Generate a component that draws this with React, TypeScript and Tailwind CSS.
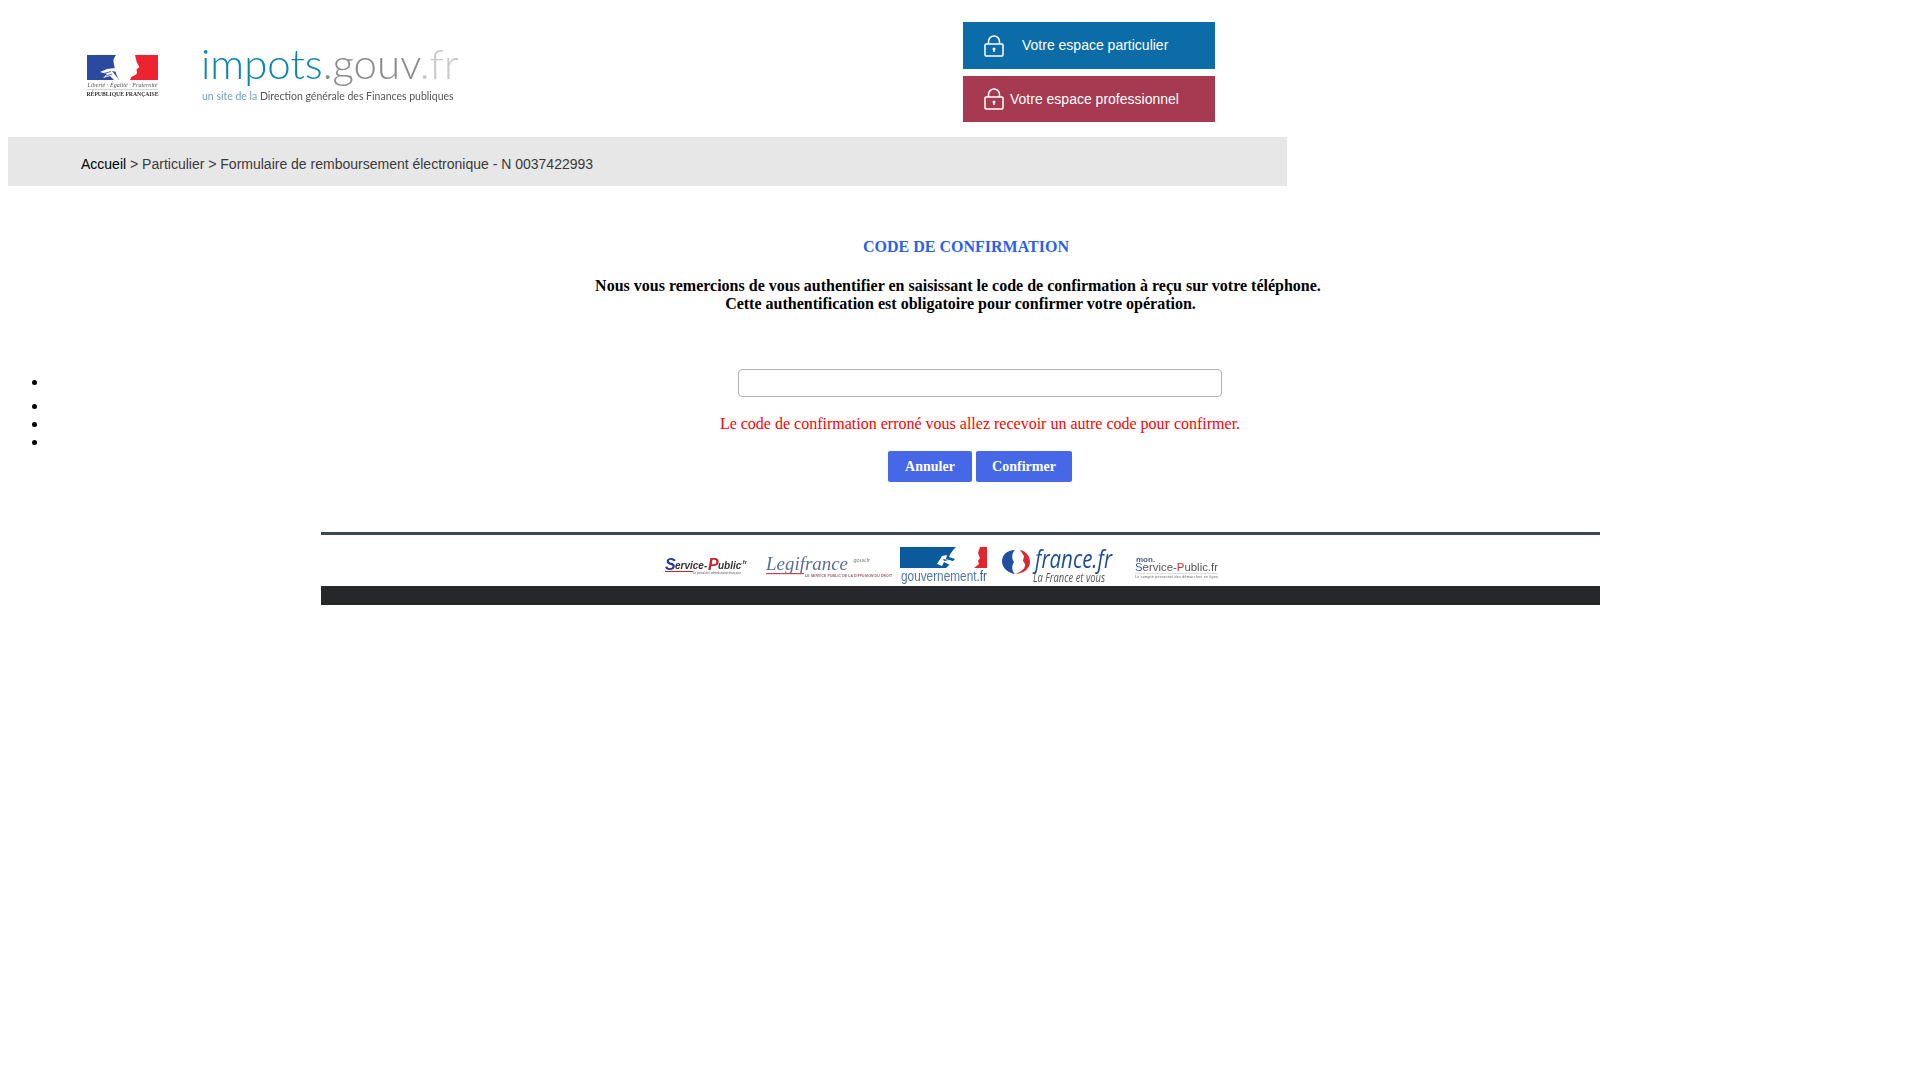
import React, { FC } from 'react';

const LockIcon: FC = () => (
  <svg width="20" height="22" viewBox="0 0 20 22" fill="none" stroke="white" strokeWidth="1.5" className="shrink-0">
    <rect x="1" y="9" width="18" height="12" rx="1" />
    <path d="M4.5 9V6.5a5.5 5.5 0 0 1 11 0V9" />
    <circle cx="10" cy="14" r="1.5" fill="white" stroke="none" />
    <rect x="9.3" y="14" width="1.4" height="3" fill="white" stroke="none" />
  </svg>
);

const RepublicLogo: FC = () => (
  <svg width="74" height="46" viewBox="0 0 74 46" className="overflow-visible blur-[0.3px]">
    <path d="M1 0H30C28 3 27 5 27.5 7C28 10 29 13 29 15C30 18 31 22 33 25H1Z" fill="#2b4a9f" />
    <path d="M49 0H72V25H44C45 23 45 22 46 21.5C48 20.5 51 20 51 17.5L50.5 14.5L53.3 12L50.7 7Z" fill="#ee2331" />
    <path d="M14 17L21 14L29 13L31 17L26 16L30 21L33 25H28L24 21L17 23L21 19Z" fill="#ffffff" />
    <path d="M18 18.5L25 16.5M20 21L26 19" stroke="#2b4a9f" strokeWidth="0.8" />
    <text x="36.5" y="32" textAnchor="middle" fontSize="6" fontStyle="italic" fontFamily="Liberation Serif, serif" fill="#555555" textLength="70">
      Liberté · Égalité · Fraternité
    </text>
    <rect x="1" y="34" width="71" height="0.6" fill="#bbbbbb" />
    <text x="36.5" y="41" textAnchor="middle" fontSize="6" fontWeight="700" fontFamily="Liberation Serif, serif" fill="#333333" textLength="72" lengthAdjust="spacingAndGlyphs">
      RÉPUBLIQUE FRANÇAISE
    </text>
  </svg>
);

const ImpotsLogo: FC = () => (
  <div className="flex w-[260px] flex-col font-['Lato',sans-serif] blur-[0.3px]">
    <div className="text-[42px] leading-[47px] font-light whitespace-nowrap">
      <span className="text-[#0c86ad]">impots</span>
      <span className="text-[#8c8c8c]">.gouv</span>
      <span className="text-[#c9c9c9]">.fr</span>
    </div>
    <div className="mt-[2px] ml-[1px] text-[10.5px] leading-[14px] whitespace-nowrap">
      <span className="text-[#6f9fc0]">un site de la </span>
      <span className="text-[#555555]">Direction générale des Finances publiques</span>
    </div>
  </div>
);

const SpaceButton: FC<{ label: string; color: string; labelClass: string; heightClass: string }> = ({
  label,
  color,
  labelClass,
  heightClass,
}) => (
  <a className={`flex w-[252px] items-center pl-[21px] font-['Liberation_Sans',sans-serif] text-[14px] text-white ${heightClass} ${color}`}>
    <LockIcon />
    <span className={labelClass}>{label}</span>
  </a>
);

const Header: FC = () => (
  <header className="flex h-[137px] w-[1288px]">
    <div className="ml-[86px] mt-[55px]">
      <RepublicLogo />
    </div>
    <div className="ml-[41px] mt-[40px]">
      <ImpotsLogo />
    </div>
    <div className="ml-[502px] mt-[22px] flex flex-col gap-[7px]">
      <SpaceButton label="Votre espace particulier" color="bg-[#0b6ca8]" labelClass="ml-[18px] pb-[2px]" heightClass="h-[47px]" />
      <SpaceButton label="Votre espace professionnel" color="bg-[#a53a50]" labelClass="ml-[6px]" heightClass="h-[46px]" />
    </div>
  </header>
);

const ServicePublicLogo: FC = () => (
  <svg width="84" height="20" viewBox="0 0 84 20" className="overflow-visible blur-[0.3px]">
    <text x="0" y="14" fontSize="16" fontWeight="700" fontStyle="italic" fontFamily="Liberation Sans, sans-serif" fill="#2d3a93">S</text>
    <text x="10" y="13" fontSize="10" fontWeight="700" fontStyle="italic" fontFamily="Liberation Sans, sans-serif" fill="#333333">ervice-</text>
    <text x="43" y="14" fontSize="16" fontWeight="700" fontStyle="italic" fontFamily="Liberation Sans, sans-serif" fill="#c8232c">P</text>
    <text x="53" y="13" fontSize="10" fontWeight="700" fontStyle="italic" fontFamily="Liberation Sans, sans-serif" fill="#333333">ublic</text>
    <text x="76" y="8" fontSize="6" fontWeight="700" fontFamily="Liberation Sans, sans-serif" fill="#444444">.fr</text>
    <rect x="0" y="15" width="28" height="1" fill="#c8232c" />
    <text x="28" y="18" fontSize="2.8" fontFamily="Liberation Sans, sans-serif" fill="#555555" textLength="48">Le portail de l'administration française</text>
  </svg>
);

const LegifranceLogo: FC = () => (
  <svg width="127" height="24" viewBox="0 0 127 24" className="overflow-visible blur-[0.3px]">
    <text x="0" y="16" fontSize="19" fontStyle="italic" fontFamily="Liberation Serif, serif" fill="#5a6f99" textLength="82" lengthAdjust="spacingAndGlyphs">Legifrance</text>
    <text x="86" y="8" fontSize="5.5" fontFamily="Liberation Sans, sans-serif" fill="#777777">.gouv.fr</text>
    <rect x="0" y="19" width="38" height="1.2" fill="#c8434a" />
    <text x="39" y="23" fontSize="3.4" fontWeight="700" fontFamily="Liberation Sans, sans-serif" fill="#9a5a60" textLength="87">LE SERVICE PUBLIC DE LA DIFFUSION DU DROIT</text>
  </svg>
);

const GouvernementLogo: FC = () => (
  <svg width="88" height="37" viewBox="0 0 88 37" className="overflow-visible blur-[0.3px]">
    <path d="M0 0H56C52 4 50 7 49 10L55 12L46 21H0Z" fill="#0a5a9c" />
    <path d="M37 17L42 9L47 8L46 12L56 15L50 18L44 15L42 19Z" fill="#ffffff" />
    <path d="M43 12L49 13L44 14Z" fill="#0a5a9c" />
    <path d="M80 0H87V21H74L79 17L78 14L80 11L78 6Z" fill="#e3262e" />
    <text x="1" y="34" fontSize="14.5" fontFamily="Liberation Sans, sans-serif" fill="#4f7a99" textLength="86" lengthAdjust="spacingAndGlyphs">
      gouvernement<tspan fill="#2f5f86">.fr</tspan>
    </text>
  </svg>
);

const FranceLogo: FC = () => (
  <svg width="112" height="37" viewBox="0 0 112 37" className="overflow-visible blur-[0.3px]">
    <path d="M13 3C5 3 0 8 0 14.500C0 21 6 26 13 27C9 23 10 18 12 15C9 11 10 6 13 3Z" fill="#214f9f" />
    <path d="M18 3C24 4 28 9 28 15C28 22 21 27 13 27C19 25 24 21 23 17L21 14L22 9Z" fill="#d62b33" />
    <text x="33" y="21" fontSize="25" fontWeight="500" fontStyle="italic" fontFamily="Open Sans, sans-serif" fill="#1f4f93" textLength="77" lengthAdjust="spacingAndGlyphs">france.fr</text>
    <text x="31" y="35" fontSize="12" fontStyle="italic" fontFamily="Open Sans, sans-serif" fill="#555555" textLength="72" lengthAdjust="spacingAndGlyphs">La France et vous</text>
  </svg>
);

const MonServiceLogo: FC = () => (
  <svg width="84" height="26" viewBox="0 0 84 26" className="overflow-visible blur-[0.3px]">
    <text x="1" y="8" fontSize="8" fontWeight="700" fontFamily="Liberation Sans, sans-serif" fill="#4a5f9e">mon.</text>
    <text x="0" y="17" fontSize="10.500" fontFamily="Liberation Sans, sans-serif" fill="#555555" textLength="83" lengthAdjust="spacingAndGlyphs">
      <tspan fill="#3a5aa8">S</tspan>ervice-<tspan fill="#c8302f">P</tspan>ublic.fr
    </text>
    <rect x="0" y="19" width="83" height="0.6" fill="#cccccc" />
    <text x="0" y="24" fontSize="3.6" fontFamily="Liberation Sans, sans-serif" fill="#666666" textLength="83">Le compte personnel des démarches en ligne</text>
  </svg>
);

const Footer: FC = () => (
  <footer className="mx-auto mt-[50px] w-[1279px] border-t-[3px] border-[#3c4550]">
    <div className="relative flex h-[51px] items-start">
      <div className="ml-[344px] mt-[21px] h-[20px]">
        <ServicePublicLogo />
      </div>
      <div className="ml-[17px] mt-[19px]">
        <LegifranceLogo />
      </div>
      <div className="ml-[7px] mt-[12px]">
        <GouvernementLogo />
      </div>
      <div className="ml-[14px] mt-[12px]">
        <FranceLogo />
      </div>
      <div className="ml-[21px] mt-[19px]">
        <MonServiceLogo />
      </div>
    </div>
    <div className="h-[19px] bg-[#26272a]" />
  </footer>
);

export default function App() {
  return (
    <div className="min-h-[1080px] bg-white font-['Liberation_Serif',serif] text-[16px] leading-[18px] text-black">
      <Header />
      <div className="ml-[8px] flex h-[49px] w-[1279px] items-center pl-[73px] pt-[5px] font-['Liberation_Sans',sans-serif] text-[14px] text-[#3a3a3a] bg-[#e7e7e7]">
        <span className="text-black">Accueil</span>
        <span className="whitespace-pre"> &gt; Particulier &gt; Formulaire de remboursement électronique - N 0037422993</span>
      </div>

      <h1 className="pl-[12px] pt-[52px] text-center text-[16px] font-bold text-[#2b60ee]">CODE DE CONFIRMATION</h1>
      <p className="mt-[21px] pr-[4px] text-center font-bold">
        Nous vous remercions de vous authentifier en saisissant le code de confirmation à reçu sur votre téléphone.
        <br />
        <span className="pl-[5px]">Cette authentification est obligatoire pour confirmer votre opération.</span>
      </p>

      <ul className="mt-[56px] list-disc pl-[48px] pr-[8px] text-center">
        <li className="h-[28px]">
          <input
            type="text"
            className="h-[28px] w-[484px] rounded-[4px] border border-[#b3b3b3] bg-white align-middle"
          />
        </li>
        <li className="h-[18px]">&nbsp;</li>
        <li>
          <span className="text-[#ff0000]">Le code de confirmation erroné vous allez recevoir un autre code pour confirmer.</span>
        </li>
        <li>
          <br />
          <div className="flex justify-center gap-[4px]">
            <button className="h-[31px] w-[84px] rounded-[2px] bg-[#4668e6] font-['Liberation_Serif',serif] text-[14px] font-bold text-white">Annuler</button>
            <button className="h-[31px] w-[96px] rounded-[2px] bg-[#4668e6] font-['Liberation_Serif',serif] text-[14px] font-bold text-white">Confirmer</button>
          </div>
        </li>
      </ul>

      <Footer />
    </div>
  );
}
